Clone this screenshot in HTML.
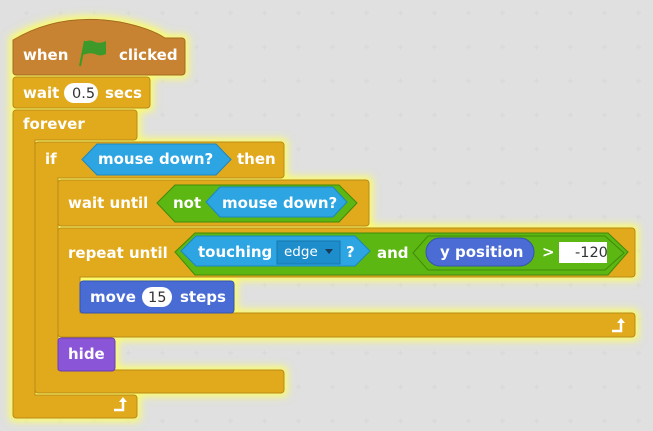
<!DOCTYPE html>
<html><head><meta charset="utf-8"><style>
html,body{margin:0;padding:0;background:#dfe0df;}
svg{display:block;}
text{font-family:"DejaVu Sans","Liberation Sans",sans-serif;font-weight:bold;font-size:15px;fill:#fff;}
.n{font-weight:normal;fill:#333;font-size:14.5px;}
</style></head><body>
<svg width="653" height="431" viewBox="0 0 653 431" xmlns="http://www.w3.org/2000/svg">
<defs>
<pattern id="dots" x="0" y="0" width="34" height="34" patternUnits="userSpaceOnUse">
<path d="M24 13h5M26.5 10.5v5" stroke="#d8d9d8" stroke-width="1.2"/>
</pattern>
<filter id="glow" x="-10%" y="-10%" width="120%" height="120%">
<feMorphology in="SourceAlpha" operator="dilate" radius="3" result="d"/>
<feGaussianBlur in="d" stdDeviation="4" result="b"/>
<feFlood flood-color="#fcfc6a"/>
<feComposite in2="b" operator="in" result="g"/>
<feMerge><feMergeNode in="g"/><feMergeNode in="SourceGraphic"/></feMerge>
</filter>
</defs>
<rect width="653" height="431" fill="#dfe0df"/>
<rect width="653" height="431" fill="url(#dots)"/>
<g filter="url(#glow)">
<path d="M16 110h118a3 3 0 0 1 3 3v24a3 3 0 0 1-3 3H35v255h99a3 3 0 0 1 3 3v17a3 3 0 0 1-3 3H16a3 3 0 0 1-3-3V113a3 3 0 0 1 3-3z" fill="#e1a91a" stroke="#b98a12" stroke-width="1"/>
<path d="M38 142h243a3 3 0 0 1 3 3v30a3 3 0 0 1-3 3H58v192h223a3 3 0 0 1 3 3v17a3 3 0 0 1-3 3H38a3 3 0 0 1-3-3V145a3 3 0 0 1 3-3z" fill="#e1a91a" stroke="#b98a12" stroke-width="1"/>
<rect x="58" y="180" width="311" height="46" rx="3" fill="#e1a91a" stroke="#b98a12"/>
<path d="M61 228h571a3 3 0 0 1 3 3v43a3 3 0 0 1-3 3H80v36h552a3 3 0 0 1 3 3v18a3 3 0 0 1-3 3H61a3 3 0 0 1-3-3V231a3 3 0 0 1 3-3z" fill="#e1a91a" stroke="#b98a12" stroke-width="1"/>
<path d="M13 40Q60 12 120 22Q150 28 165 38h17a3 3 0 0 1 3 3v31a3 3 0 0 1-3 3H16a3 3 0 0 1-3-3z" fill="#c88330" stroke="#a46a22"/>
<rect x="13" y="77" width="137" height="31" rx="3" fill="#e1a91a" stroke="#b98a12"/>
<rect x="80" y="281" width="154" height="32" rx="3" fill="#4a6cd4" stroke="#3654b0"/>
<rect x="58" y="338" width="57" height="33" rx="3" fill="#8a55d7" stroke="#6b3db5"/>
</g>
<text x="23" y="60">when</text>
<path d="M80 66L85 41" stroke="#3b9a25" stroke-width="2"/>
<path d="M84 42q6-3 11 0q5 2 11-1v13q-6 3-11 0q-5-2-12 1z" fill="#3d9a2a"/>
<text x="119" y="60">clicked</text>
<text x="23" y="98">wait</text>
<rect x="64" y="83" width="34" height="20" rx="10" fill="#fff"/>
<text x="72" y="98" class="n">0.5</text>
<text x="105" y="98">secs</text>
<text x="23" y="129">forever</text>
<text x="45" y="164">if</text>
<polygon points="82,159.5 97,144 216,144 231,159.5 216,175 97,175" fill="#2ca5e2" stroke="#1d86c0"/>
<text x="98" y="164">mouse down?</text>
<text x="237" y="164">then</text>
<text x="68" y="208">wait until</text>
<polygon points="157,203 175,185 339,185 357,203 339,222 175,222" fill="#5cb712" stroke="#3f8a0b"/>
<text x="173" y="208">not</text>
<polygon points="206,202 220,187 333,187 347,202 333,217 220,217" fill="#2ca5e2" stroke="#1d86c0"/>
<text x="222" y="208">mouse down?</text>
<text x="68" y="258">repeat until</text>
<polygon points="175,252 195,233 608,233 628,252 608,275 195,275" fill="#5cb712" stroke="#3f8a0b"/>
<polygon points="181,251 196,236 355,236 370,251 355,266 196,266" fill="#2ca5e2" stroke="#1d86c0"/>
<text x="198" y="257">touching</text>
<rect x="277" y="241" width="63" height="23" fill="#1e8dcb" stroke="#1877ad"/>
<text x="284" y="256" style="font-weight:normal;font-size:13.5px">edge</text>
<polygon points="325,249 333,249 329,254" fill="#1a3a5a"/>
<text x="346" y="257">?</text>
<text x="377" y="258">and</text>
<polygon points="413,253 428,236 605,236 624,253 605,270 428,270" fill="#5cb712" stroke="#3f8a0b"/>
<rect x="426" y="238" width="108" height="28" rx="14" fill="#4a6cd4" stroke="#3654b0"/>
<text x="440" y="257">y position</text>
<text x="542" y="257">&gt;</text>
<rect x="559" y="242" width="48" height="21" fill="#fff"/>
<text x="575" y="257" class="n">-120</text>
<text x="90" y="302">move</text>
<rect x="142" y="287" width="30" height="20" rx="10" fill="#fff"/>
<text x="148" y="302" class="n">15</text>
<text x="180" y="302">steps</text>
<text x="68" y="359">hide</text>
<path d="M612 331h9v-8" stroke="#fff" stroke-width="2.5" fill="none"/>
<polygon points="617,323 625,323 621,318" fill="#fff"/>
<path d="M114 410h9v-8" stroke="#fff" stroke-width="2.5" fill="none"/>
<polygon points="119,402 127,402 123,397" fill="#fff"/>
</svg>
</body></html>
